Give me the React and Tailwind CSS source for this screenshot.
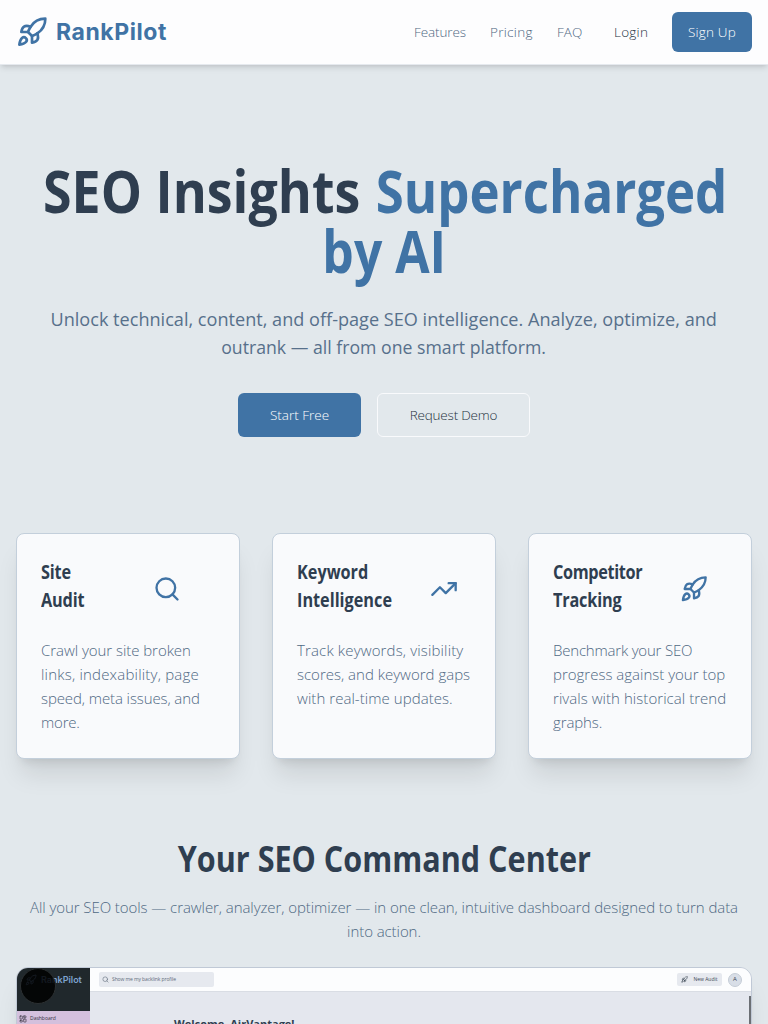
import { Rocket, Search, TrendingUp, LayoutDashboard } from "lucide-react";

const CARDS = [
  {
    title: [["Site", "tracking-[-0.2px]"], ["Audit", "tracking-[-0.2px]"]],
    Icon: Search,
    width: "w-[140px]",
    body: [
      ["Crawl your site broken", "tracking-[-0.05px]"],
      ["links, indexability, page", "tracking-[0.2px]"],
      ["speed, meta issues, and", "tracking-[-0.1px]"],
      ["more.", "tracking-[-0.2px]"],
    ],
  },
  {
    title: [["Keyword", ""], ["Intelligence", ""]],
    Icon: TrendingUp,
    width: "w-[161px]",
    body: [
      ["Track keywords, visibility", "tracking-[0.15px]"],
      ["scores, and keyword gaps", ""],
      ["with real-time updates.", "tracking-[0.05px]"],
    ],
  },
  {
    title: [["Competitor", "tracking-[-0.4px]"], ["Tracking", "tracking-[-0.2px]"]],
    Icon: Rocket,
    width: "w-[155px]",
    body: [
      ["Benchmark your SEO", "tracking-[-0.2px]"],
      ["progress against your top", ""],
      ["rivals with historical trend", "tracking-[0.05px]"],
      ["graphs.", "tracking-[-0.1px]"],
    ],
  },
];

function Header() {
  return (
    <header className="relative z-10 flex h-[65px] items-center justify-between border-b border-[#e5e9ee] bg-[#fdfdfe] px-4 shadow-md">
      <div className="flex items-center gap-2 text-[#4073a5]">
        <Rocket size={32} />
        <span className="font-['Inter'] text-[23px] font-bold tracking-[0.55px]">RankPilot</span>
      </div>
      <nav className="flex items-center text-[13.5px] font-light text-[#4f6883]">
        <a className="mr-6 w-[52px] whitespace-nowrap tracking-[-0.1px]">Features</a>
        <a className="mr-6 w-[43px] whitespace-nowrap tracking-[0.3px]">Pricing</a>
        <a className="mr-[31px] w-[26px] whitespace-nowrap">FAQ</a>
        <a className="mr-6 w-[34px] whitespace-nowrap tracking-[0.25px] text-[#26333f]">Login</a>
        <a className="flex h-10 w-20 items-center justify-center whitespace-nowrap rounded-md bg-[#4073a5] tracking-[0.2px] text-white">Sign Up</a>
      </nav>
    </header>
  );
}

function Hero() {
  return (
    <section className="flex flex-col items-center pt-[95px]">
      <h1 className="flex flex-col items-center whitespace-nowrap text-[59px] leading-[60px] font-bold text-[#2f3e50]">
        <span className="flex w-[686px] justify-between">
          <span className="ml-0.5 w-[318px] origin-left scale-x-[0.88]">SEO Insights</span>
          <span className="flex w-[352px] justify-end text-[#4073a5]">
            <span className="origin-right scale-x-[0.863]">Supercharged</span>
          </span>
        </span>
        <span className="block scale-x-[0.845] text-[#4073a5]">by AI</span>
      </h1>
      <p className="mt-[25px] flex flex-col items-center whitespace-nowrap text-[19px] leading-7 text-[#57708b]">
        <span className="block scale-x-[0.953]">Unlock technical, content, and off-page SEO intelligence. Analyze, optimize, and</span>
        <span className="block scale-x-[0.93]">outrank — all from one smart platform.</span>
      </p>
      <div className="mt-8 flex gap-4 text-[13.5px] font-light">
        <button className="h-11 w-[123px] rounded-md bg-[#4073a5] text-white">Start Free</button>
        <button className="h-11 w-[153px] rounded-md border border-[#f9fafc] tracking-[-0.2px] text-[#26333f]">Request Demo</button>
      </div>
    </section>
  );
}

function Card({ title, Icon, width, body }) {
  return (
    <article className="h-[226px] rounded-lg border border-[#c3cfdb] bg-[#f9fafc] p-6 shadow-xl">
      <div className={`flex items-center justify-between ${width}`}>
        <h3 className="text-[19px] leading-7 font-bold text-[#2f3e50]">
          {title.map(([line, tracking]) => (
            <span key={line} className={`block w-20 origin-left scale-x-[0.855] whitespace-nowrap ${tracking}`}>{line}</span>
          ))}
        </h3>
        <Icon size={28} className="mt-1.5 shrink-0 text-[#4073a5]" />
      </div>
      <p className="mt-6 text-[15px] leading-6 font-light text-[#4f6883]">
        {body.map(([line, tracking]) => (
          <span key={line} className={`block whitespace-nowrap ${tracking}`}>{line}</span>
        ))}
      </p>
    </article>
  );
}

function Dashboard() {
  return (
    <div className="relative mt-6 flex h-[460px] overflow-hidden rounded-xl border border-[#c0c9d6] bg-[#e4e7ee] shadow-xl">
      <aside className="w-[73px] shrink-0 bg-[#20282c]">
        <div className="flex h-[43px] items-start gap-1 pt-[6px] pl-2 text-[#7da3cf]">
          <Rocket size={12} />
          <span className="font-['Inter'] text-[9px] leading-3 font-semibold">RankPilot</span>
        </div>
        <div className="flex h-4 items-center gap-[3px] bg-[#d4c0dd] pl-[2px] text-[#33303c]">
          <LayoutDashboard size={8} />
          <span className="text-[5px]">Dashboard</span>
        </div>
      </aside>
      <div className="flex-1">
        <div className="flex h-6 items-center border-b border-[#d9dde4] bg-[#fcfdfe] pr-[9px] pl-[9px]">
          <div className="flex h-[15px] w-[115px] items-center gap-[3px] rounded-xs bg-[#e6e9ef] pl-[3px] text-[#5f6b7a]">
            <Search size={7} />
            <span className="text-[5px] tracking-[-0.1px] whitespace-nowrap">Show me my backlink profile</span>
          </div>
          <div className="mr-1.5 ml-auto flex h-[13px] w-[45px] items-center justify-center gap-[5px] rounded-xs bg-[#e6e9ef] text-[#3b4653]">
            <Rocket size={7} />
            <span className="text-[5px] whitespace-nowrap">New Audit</span>
          </div>
          <div className="flex size-[14px] items-center justify-center rounded-full border border-[#c4ccd6] bg-[#d8dee7] text-[6px] text-[#3b4653]">A</div>
        </div>
        <div className="flex justify-between">
          <p className="pt-[25px] pl-[84px] text-[11px] leading-[14px] font-bold text-[#2f3e50]">Welcome, AirVantage!</p>
          <div className="mt-1 h-[400px] w-[2px] bg-[#6b6f74]" />
        </div>
      </div>
      <div className="absolute top-0 left-[3px] size-[36px] rounded-full border border-[#2c3032] bg-black/85" />
    </div>
  );
}

export default function App() {
  return (
    <div className="h-[1024px] overflow-hidden bg-[#e2e8ec] font-['Open_Sans',sans-serif]">
      <Header />
      <Hero />
      <section className="mt-24 grid grid-cols-3 gap-8 px-4">
        {CARDS.map((card) => (
          <Card key={card.title[0][0]} {...card} />
        ))}
      </section>
      <section className="px-4 pt-20">
        <h2 className="flex justify-center whitespace-nowrap text-[36px] leading-10 font-bold text-[#2f3e50]">
          <span className="block scale-x-[0.849]">Your SEO Command Center</span>
        </h2>
        <p className="mt-4 flex flex-col items-center whitespace-nowrap text-[15px] leading-6 font-light tracking-[-0.07px] text-[#4f6883]">
          <span>All your SEO tools — crawler, analyzer, optimizer — in one clean, intuitive dashboard designed to turn data</span>
          <span>into action.</span>
        </p>
        <Dashboard />
      </section>
    </div>
  );
}
